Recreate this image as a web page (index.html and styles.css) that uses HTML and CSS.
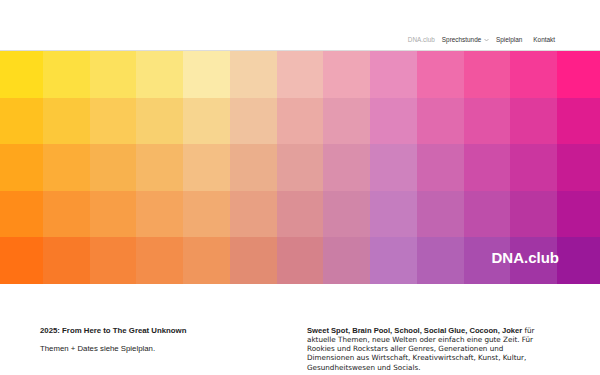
FILE: index.html
```html
<!DOCTYPE html>
<html>
<head>
  <meta charset="UTF-8">
  <title>DNA.club</title>
  <link rel="stylesheet" href="styles.css">
</head>
<body>

  <header class="top">
    <nav class="nav">
      <a class="nav-home" href="#">DNA.club</a>
      <a href="#">Sprechstunde <svg class="chev" width="5" height="4" viewBox="0 0 5 4"><path d="M0.5 1 L2.5 3 L4.5 1" fill="none" stroke="#999" stroke-width="0.7"/></svg></a>
      <a href="#">Spielplan</a>
      <a class="nav-last" href="#">Kontakt</a>
    </nav>
  </header>

  <section class="hero">
    <div id="grid" class="grid"></div>
    <div class="logo">DNA.club</div>
  </section>

  <main class="content">
    <div class="col">
      <h2>2025: From Here to The Great Unknown</h2>
      <p class="plain">Themen + Dates siehe Spielplan.</p>
    </div>
    <div class="col">
      <p class="text"><strong>Sweet Spot, Brain Pool, School, Social Glue, Cocoon, Joker</strong> für aktuelle Themen, neue Welten oder einfach eine gute Zeit. Für Rookies und Rockstars aller Genres, Generationen und Dimensionen aus Wirtschaft, Kreativwirtschaft, Kunst, Kultur, Gesundheitswesen und Socials.</p>
    </div>
  </main>

  <script>
    // Farbfelder, Zeile für Zeile
    const colors = [
      ["#ffdc1e","#fde040","#fce15d","#fbe57e","#fbeaa8","#f4d2a8","#f1bbb3","#efa6b6","#e98dbd","#ef6dac","#f2559f","#f53a97","#ff1f89"],
      ["#ffc11f","#fcc83a","#fbcb57","#f8d06f","#f7d58f","#f0c29e","#ebaba5","#e49bb0","#df84bc","#e16aae","#e154a6","#df3a9c","#e01c8f"],
      ["#ffa61c","#fcad37","#f8b24e","#f6b866","#f4bf84","#ebaf8c","#e3a09c","#da8fac","#cf82be","#cf67b0","#ce4da8","#cb369f","#c71b93"],
      ["#ff8c19","#fa9634","#f89e46","#f5a55d","#f2ab71","#e8a083","#dc9095","#d186a8","#c57dbf","#c165b1","#be4eaa","#b936a0","#b41796"],
      ["#ff7114","#f97a28","#f6853a","#f38d4a","#f0965c","#e28c72","#d6828a","#ca7ea5","#bb77c0","#b161b5","#a94dae","#a135a4","#9a1899"]
    ];

    const grid = document.getElementById("grid");
    colors.forEach(function(row) {
      row.forEach(function(c) {
        const cell = document.createElement("div");
        cell.className = "cell";
        cell.style.background = c;
        grid.appendChild(cell);
      });
    });
  </script>

</body>
</html>
```

FILE: styles.css
```css
body {
  margin: 0;
  font-family: "Liberation Sans", Arial, sans-serif;
  color: #222;
  background: #fff;
}
.top {
  height: 50px;
  border-bottom: 1px solid #dcdcdc;
  display: flex;
  justify-content: flex-end;
  align-items: flex-end;
  padding-right: 45px;
}
.nav {
  display: flex;
  gap: 7px;
  padding-bottom: 7px;
  font-size: 6.4px;
}
.nav a {
  color: #333;
  text-decoration: none;
}
.nav .nav-home { color: #aaa; }
.nav .nav-last { margin-left: 4px; }
.chev { margin-left: 1px; vertical-align: middle; }

.hero { position: relative; }
.grid {
  display: grid;
  grid-template-columns: 43px repeat(11, 1fr) 43px;
  grid-auto-rows: 46.5px;
}
.logo {
  position: absolute;
  right: 41px;
  bottom: 19px;
  color: #fff;
  font-weight: bold;
  font-size: 15px;
  line-height: 15px;
}

.content {
  display: grid;
  grid-template-columns: 1fr 1fr;
  gap: 14px;
  padding: 42px 40px 0 40px;
}
.col h2 {
  margin: 0 0 9px 0;
  font-size: 7.8px;
  line-height: 9px;
  font-weight: bold;
}
.plain {
  margin: 0;
  font-size: 7.8px;
  line-height: 9px;
}
.text {
  max-width: 240px;
  margin: 0;
  font-family: "DejaVu Sans", Verdana, sans-serif;
  font-size: 7.2px;
  line-height: 9.3px;
}
.text strong {
  font-family: "Liberation Sans", Arial, sans-serif;
  font-size: 7.6px;
  line-height: 9.3px;
}
```
